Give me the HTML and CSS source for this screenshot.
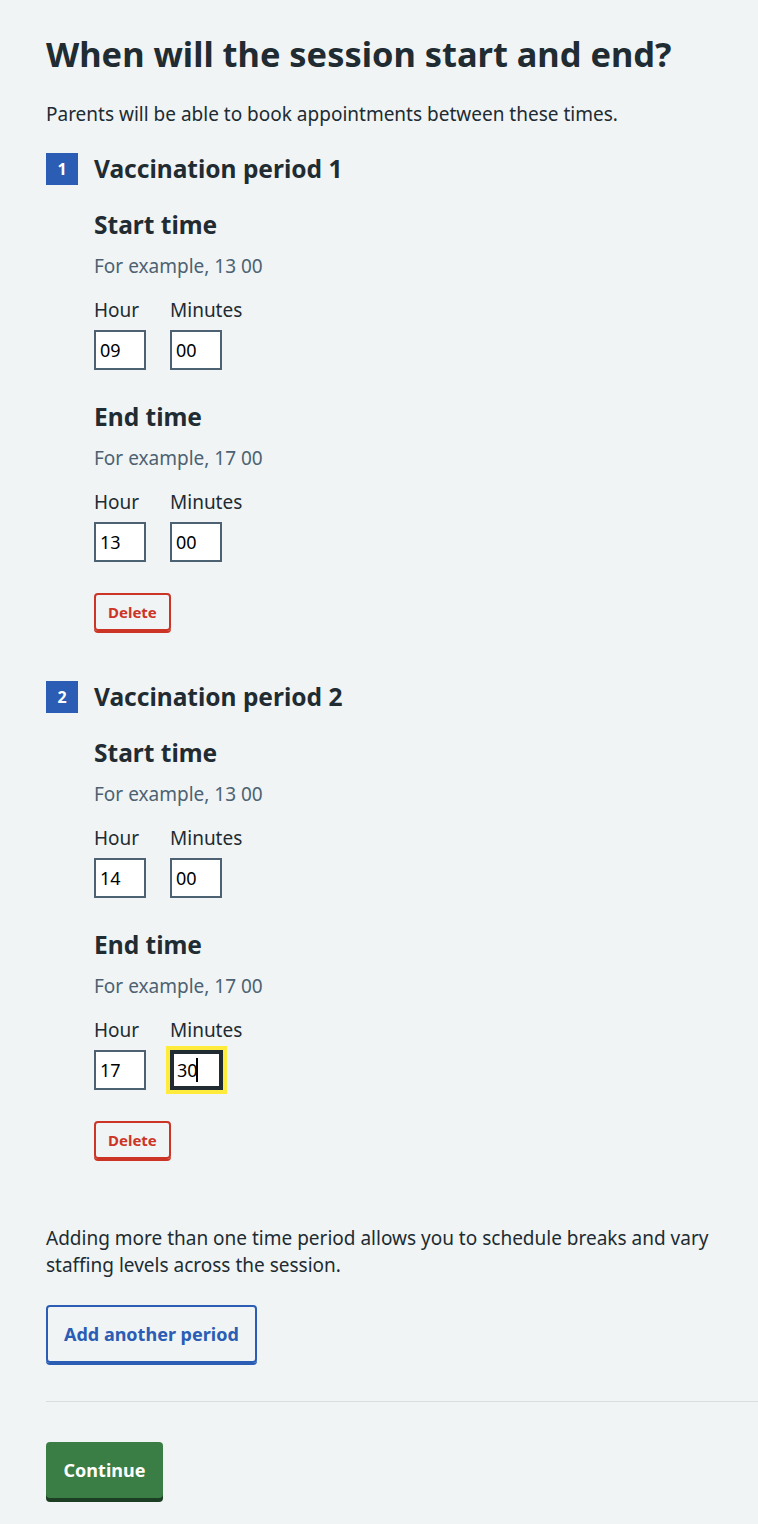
FILE: index.html
```html
<!DOCTYPE html>
<html lang="en">
<head>
<meta charset="utf-8">
<title>When will the session start and end?</title>
<link rel="stylesheet" href="styles.css">
</head>
<body>
<main class="page">
  <h1 class="title">When will the session start and end?</h1>
  <p class="lead">Parents will be able to book appointments between these times.</p>

  <section class="period">
    <div class="period-head"><span class="badge">1</span><h2 class="period-title">Vaccination period 1</h2></div>
    <div class="period-body">
      <div class="time-group">
        <h3 class="time-title">Start time</h3>
        <p class="hint">For example, 13 00</p>
        <div class="fields">
          <label class="field"><span class="label">Hour</span><input class="input" type="text" value="09"></label>
          <label class="field"><span class="label">Minutes</span><input class="input" type="text" value="00"></label>
        </div>
      </div>
      <div class="time-group">
        <h3 class="time-title">End time</h3>
        <p class="hint">For example, 17 00</p>
        <div class="fields">
          <label class="field"><span class="label">Hour</span><input class="input" type="text" value="13"></label>
          <label class="field"><span class="label">Minutes</span><input class="input" type="text" value="00"></label>
        </div>
      </div>
      <button class="btn-delete" type="button">Delete</button>
    </div>
  </section>

  <section class="period">
    <div class="period-head"><span class="badge">2</span><h2 class="period-title">Vaccination period 2</h2></div>
    <div class="period-body">
      <div class="time-group">
        <h3 class="time-title">Start time</h3>
        <p class="hint">For example, 13 00</p>
        <div class="fields">
          <label class="field"><span class="label">Hour</span><input class="input" type="text" value="14"></label>
          <label class="field"><span class="label">Minutes</span><input class="input" type="text" value="00"></label>
        </div>
      </div>
      <div class="time-group">
        <h3 class="time-title">End time</h3>
        <p class="hint">For example, 17 00</p>
        <div class="fields">
          <label class="field"><span class="label">Hour</span><input class="input" type="text" value="17"></label>
          <label class="field"><span class="label">Minutes</span><span class="focus-wrap"><input class="input input-focus" type="text" value="30"><span class="caret"></span></span></label>
        </div>
      </div>
      <button class="btn-delete" type="button">Delete</button>
    </div>
  </section>

  <p class="note">Adding more than one time period allows you to schedule breaks and vary staffing levels across the session.</p>
  <button class="btn-secondary" type="button">Add another period</button>
  <hr class="rule">
  <button class="btn-primary" type="button">Continue</button>
</main>
</body>
</html>
```

FILE: styles.css
```css
* { box-sizing: border-box; }
html, body { margin: 0; padding: 0; }
body {
  background: #f0f4f5;
  color: #212b32;
  font-family: "Noto Sans", "Open Sans", sans-serif;
}
.page {
  padding: 34px 0 22px 46px;
}
.title {
  margin: 0;
  font-size: 34.4px;
  line-height: 40px;
  font-weight: 700;
}
.lead {
  margin: 26px 0 0 0;
  font-size: 19px;
  line-height: 28px;
}
.period { margin-top: 25px; }
.period + .period { margin-top: 50px; }
.period-head {
  display: flex;
  align-items: center;
  gap: 16px;
  height: 32px;
}
.badge {
  flex: none;
  width: 32px;
  height: 32px;
  background: #2a5db3;
  color: #fff;
  font-weight: 700;
  font-size: 16px;
  display: flex;
  align-items: center;
  justify-content: center;
}
.period-title {
  margin: 0;
  font-size: 24.5px;
  line-height: 32px;
  font-weight: 700;
}
.period-body { padding-left: 48px; }
.time-group { margin-top: 24px; }
.time-group + .time-group { margin-top: 31px; }
.time-title {
  margin: 0;
  font-size: 24.5px;
  line-height: 32px;
  font-weight: 700;
}
.hint {
  margin: 11px 0 0 0;
  color: #4c6272;
  font-size: 19px;
  line-height: 28px;
}
.fields {
  display: flex;
  gap: 24px;
  margin-top: 16px;
}
.field { display: flex; flex-direction: column; }
.label {
  font-size: 19px;
  line-height: 28px;
  margin-bottom: 6px;
}
.input {
  width: 52px;
  height: 40px;
  border: 2px solid #4c6272;
  border-radius: 0;
  background: #fff;
  font-family: "Noto Sans", sans-serif;
  font-size: 18px;
  color: #000;
  padding: 0 4px;
  margin: 0;
  outline: none;
}
.focus-wrap {
  position: relative;
  display: block;
  width: 53px;
}
.input-focus {
  width: 53px;
  border: 4px solid #212b32;
  outline: 4px solid #ffeb3b;
  padding: 0 3px;
}
.caret {
  position: absolute;
  left: 26px;
  top: 8px;
  width: 1.5px;
  height: 24px;
  background: #000;
}
.btn-delete {
  margin-top: 31px;
  display: block;
  height: 38px;
  padding: 0 12px;
  border: 2px solid #cc3426;
  border-radius: 4px;
  box-shadow: 0 2px 0 #cc3426;
  background: transparent;
  color: #cc3426;
  font-family: "Noto Sans", sans-serif;
  font-size: 15px;
  font-weight: 700;
}
.note {
  margin: 66px 0 0 0;
  font-size: 19px;
  line-height: 27px;
}
.btn-secondary {
  margin-top: 26px;
  display: block;
  height: 58px;
  padding: 0 16px;
  border: 2px solid #2a5db3;
  border-radius: 4px;
  box-shadow: 0 2px 0 #2a5db3;
  background: transparent;
  color: #2a5db3;
  font-family: "Noto Sans", sans-serif;
  font-size: 18px;
  font-weight: 700;
}
.rule {
  margin: 38px 0 0 0;
  border: 0;
  border-top: 1px solid #d8dde0;
}
.btn-primary {
  margin-top: 40px;
  display: block;
  height: 56px;
  width: 117px;
  border: 0;
  border-radius: 4px;
  box-shadow: 0 4px 0 #1c3f23;
  background: #3a7d45;
  color: #fff;
  font-family: "Noto Sans", sans-serif;
  font-size: 18px;
  font-weight: 700;
}
```
